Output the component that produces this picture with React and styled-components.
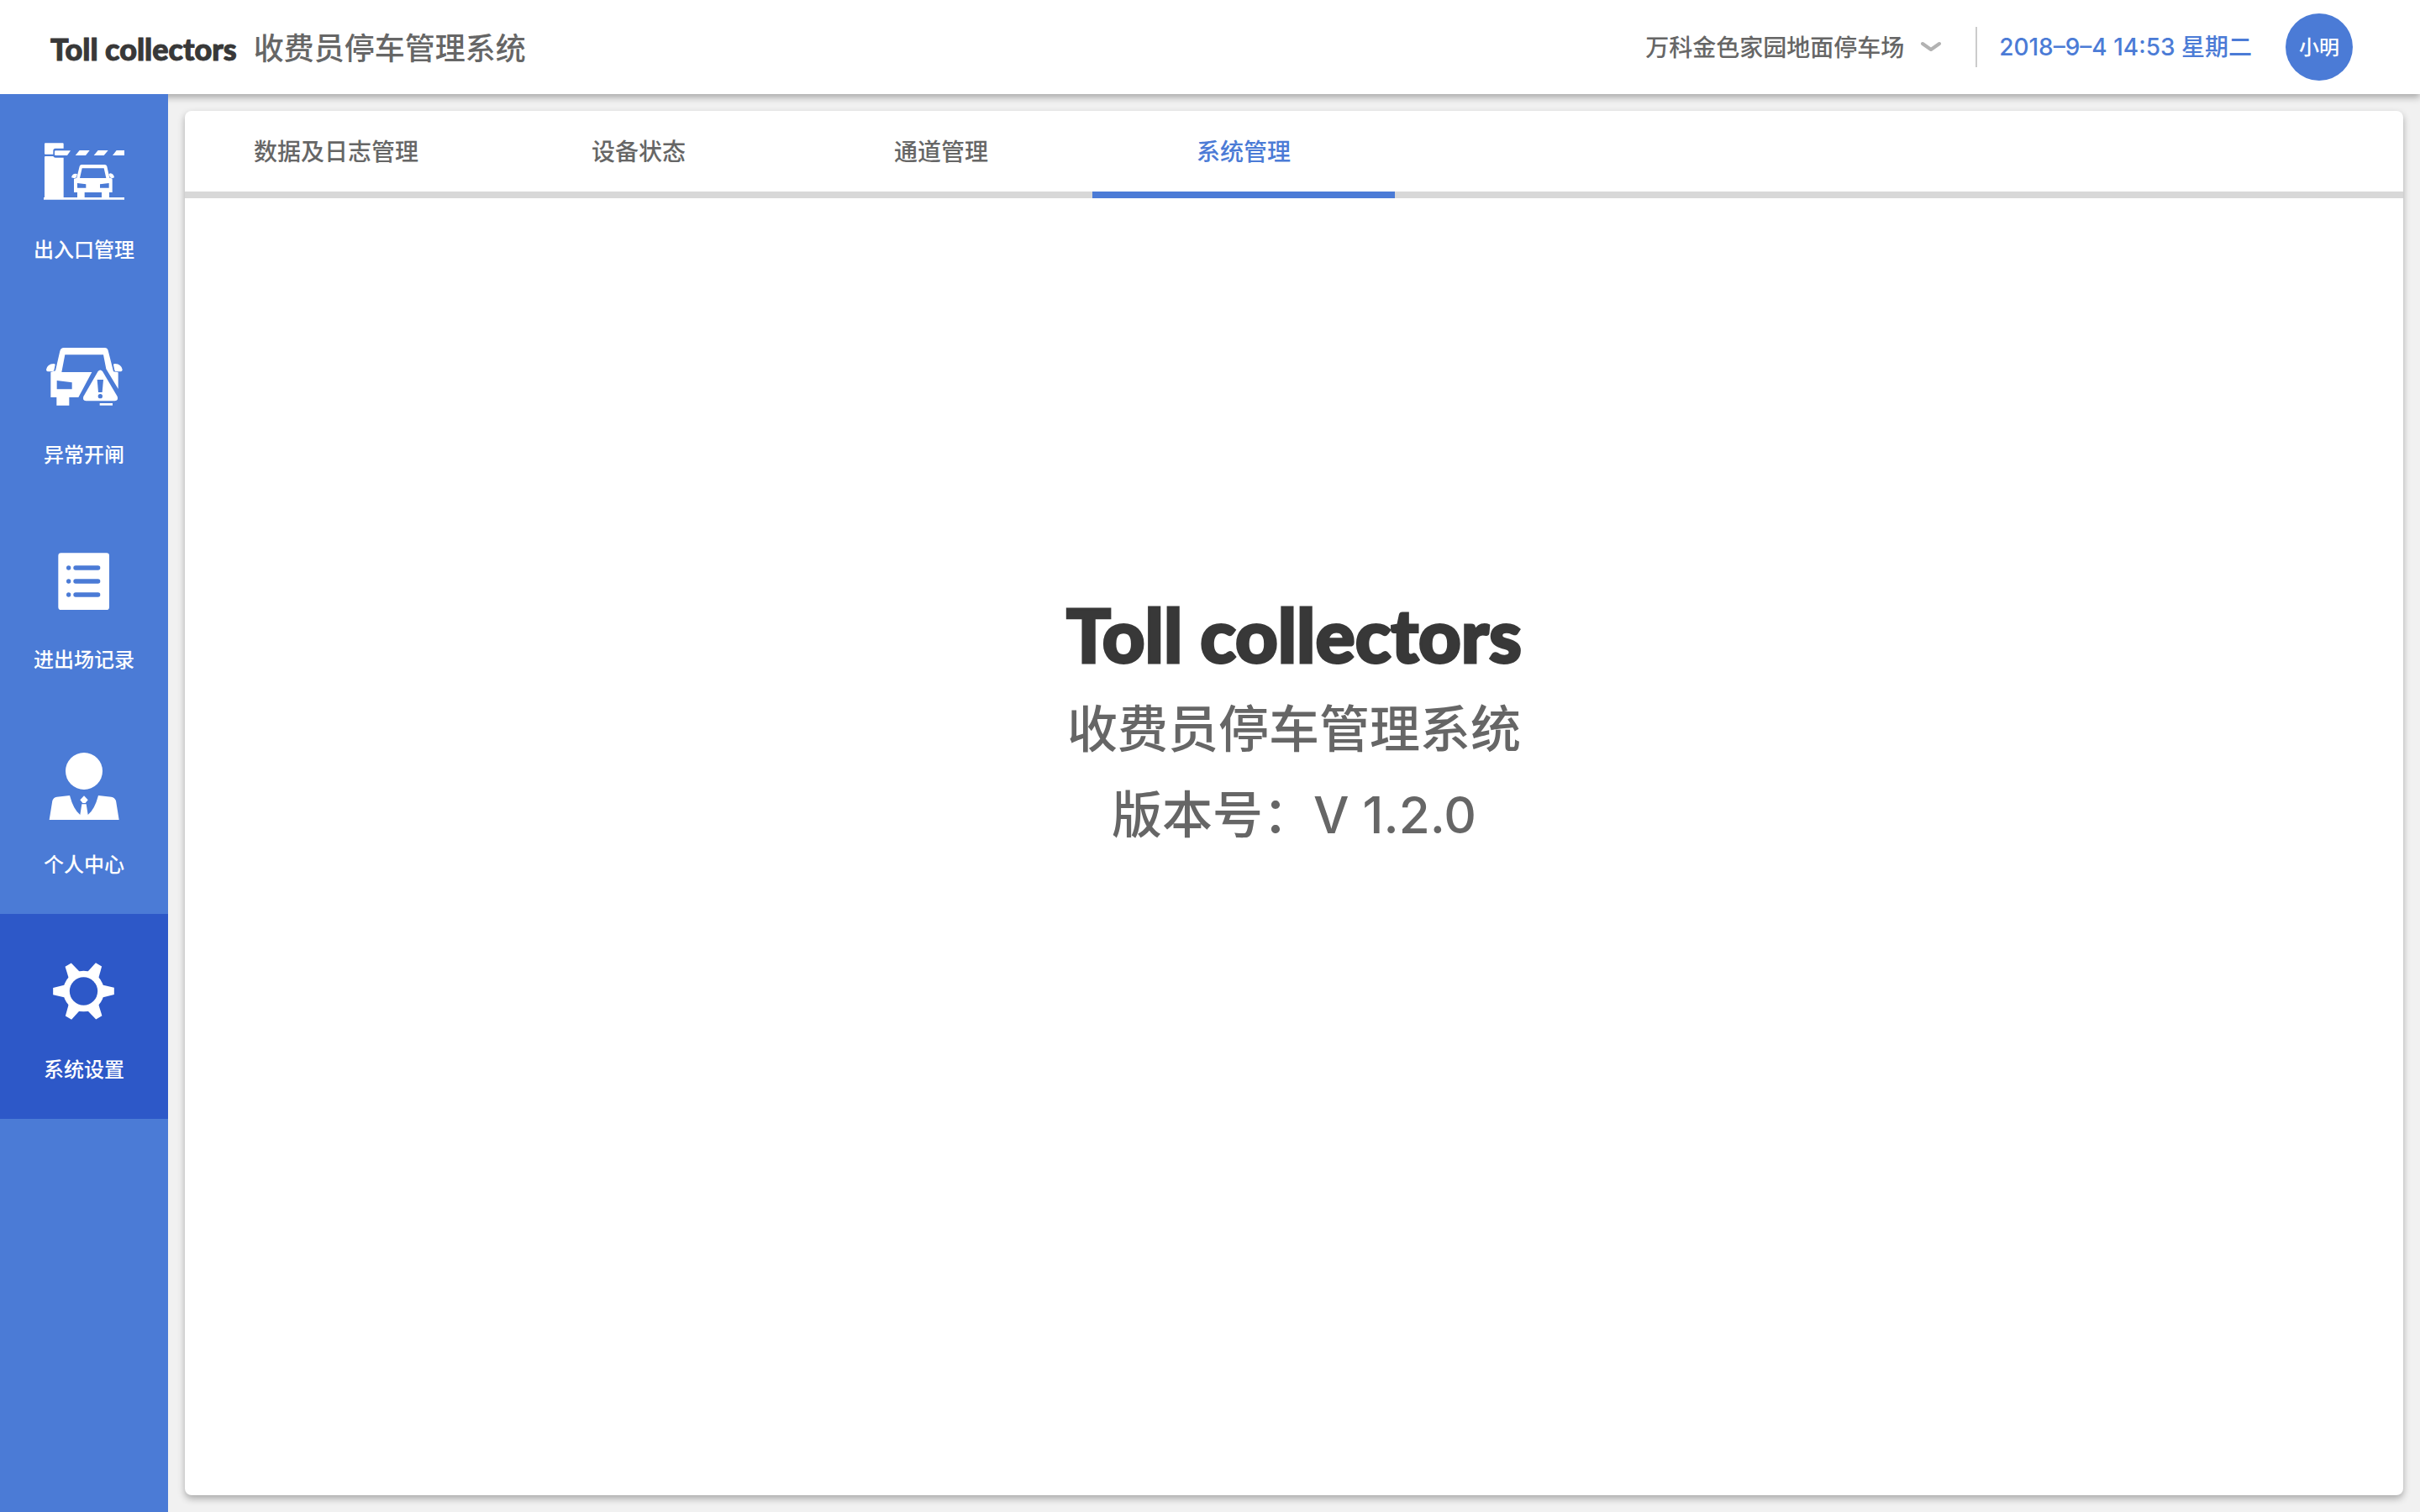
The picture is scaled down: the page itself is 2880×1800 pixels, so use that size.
import React, { useState } from "react";
import styled, { createGlobalStyle } from "styled-components";

const BLUE = "#4b7bd6";
const BLUE_DARK = "#2d58c8";
const INK = "#383838";
const GREY = "#666666";
const SHADOW = "0 4px 8px rgba(0, 0, 0, 0.3)";

const GlobalStyle = createGlobalStyle`
  *, *::before, *::after { box-sizing: border-box; }
  body {
    margin: 0;
    background: #f1f1f1;
    color: ${GREY};
    font-family: Inter, "Noto Sans CJK SC", sans-serif;
    font-weight: 500;
  }
  button, select {
    margin: 0;
    padding: 0;
    border: 0;
    background: none;
    color: inherit;
    font: inherit;
    cursor: pointer;
  }
  h1, p { margin: 0; }
`;

const Page = styled.div`
  min-height: 100vh;
  display: flex;
  flex-direction: column;
`;

const Header = styled.header`
  height: 112px;
  padding: 0 80px 0 60px;
  display: flex;
  align-items: center;
  justify-content: space-between;
  background: #fff;
  box-shadow: ${SHADOW};
`;

const Brand = styled.div`
  display: flex;
  align-items: center;
  gap: 20px;
  padding-top: 4px;
`;

const Wordmark = styled.span`
  color: ${INK};
  font-family: Lato, "Liberation Sans", sans-serif;
  font-weight: 900;
  font-size: ${(p) => (p.$large ? 88 : 36)}px;
  line-height: ${(p) => (p.$large ? 118 : 48)}px;
  -webkit-text-stroke: ${(p) => (p.$large ? 3 : 1)}px ${INK};
`;

const BrandName = styled.span`
  font-size: 36px;
  line-height: 48px;
`;

const Tools = styled.div`
  display: flex;
  align-items: center;
  font-size: 28px;
  line-height: 40px;
`;

const LotPicker = styled.label`
  display: grid;
  align-items: center;
  padding-right: 40px;

  & > * { grid-area: 1 / 1; }
  & > svg { justify-self: end; pointer-events: none; }
`;

const LotSelect = styled.select`
  appearance: none;
  padding-top: 2px;
  padding-right: 44px;
  line-height: 40px;
`;

const Clock = styled.time`
  height: 48px;
  padding: 0 40px 0 26px;
  border-left: 2px solid #cccccc;
  color: ${BLUE};
  line-height: 48px;
  white-space: pre;
`;

const Avatar = styled.button`
  width: 80px;
  height: 80px;
  padding-top: 2px;
  border-radius: 50%;
  background: ${BLUE};
  color: #fff;
  font-size: 24px;
`;

const Body = styled.div`
  flex: 1;
  display: flex;
`;

const Sidebar = styled.nav`
  position: relative;
  width: 200px;
  flex: none;
  display: flex;
  flex-direction: column;
  background: ${BLUE};
`;

const SideItem = styled.button`
  height: 244px;
  padding-bottom: 40px;
  padding-top: 44px;
  display: flex;
  flex-direction: column;
  align-items: center;
  gap: 28px;
  background: ${(p) => (p.$active ? BLUE_DARK : "transparent")};
  color: #fff;
  font-size: 24px;
  line-height: 36px;
`;

const Main = styled.main`
  flex: 1;
  display: flex;
  padding: 20px;
`;

const Card = styled.section`
  flex: 1;
  display: flex;
  flex-direction: column;
  background: #fff;
  border-radius: 8px;
  box-shadow: ${SHADOW};
`;

const Tabs = styled.div`
  display: flex;
  height: 104px;
  background: linear-gradient(#d8d8d8, #d8d8d8) bottom / 100% 8px no-repeat;
`;

const Tab = styled.button`
  width: 360px;
  padding-top: 2px;
  border-bottom: 8px solid ${(p) => (p.$active ? BLUE : "transparent")};
  color: ${(p) => (p.$active ? BLUE : GREY)};
  font-size: 28px;
  line-height: 40px;
`;

const About = styled.div`
  flex: 1;
  padding-top: 460px;
  display: flex;
  flex-direction: column;
  align-items: center;
  gap: 6px;
  text-align: center;
`;

const AboutLine = styled.p`
  font-size: 60px;
  line-height: 96px;
`;

function GateIcon({ cut }) {
  return (
    <svg width="96" height="96" viewBox="156 48 288 288" fill="#fff" aria-hidden="true">
      <path d="M159 94q0-3 3-3H224q3 0 3 3V110H198Q190 110 190 118V131H162q-3 0-3-3Z" />
      <path d="M159 141q0-3 3-3H190q2 5 8 5H227V286H159Z" />
      <path d="M199 118H252L240 135H199q-4 0-4-4V122q0-4 4-4Z" />
      <path d="M284 117H320L306 135H269ZM350 117H386L371 135H335ZM416 117H444V135H402Z" />
      <path d="M156 285H444V293H156Z" />
      <path d="M291 168H374Q380 168 382 174L391 215L398 217Q401 218 401 221V267H390V286H363V267H302V286H276V267H264V219L274 215L284 174Q286 168 291 168Z" />
      <path d="M255 214Q257 200 270 200L276 202L272 214L266 217ZM408 214Q406 200 394 199L388 202L393 214L400 217Z" />
      <path fill={cut} d="M293 181H371L379 216H285ZM276 234L307 238V251H276ZM389 234L357 238V251H389Z" />
    </svg>
  );
}

function AlertCarIcon({ cut }) {
  return (
    <svg width="96" height="96" viewBox="156 30 288 288" fill="#fff" aria-hidden="true">
      <path d="M228 72H374Q383 72 386 82L405 157L422 160V219L379 148L369 97H232L220 159H328L280 249H247V278H202V249H181V159L198 154L214 84Q217 72 228 72Z" />
      <path d="M165 150Q169 130 191 129Q197 129 197 133L193 152Q191 157 186 157H170Q165 156 165 150ZM437 150Q433 130 411 129Q404 129 405 133L409 152Q411 157 416 157H432Q437 156 437 150Z" />
      <path fill={cut} d="M203 189L257 196V220H203Z" />
      <path d="M350 156Q358 147 366 156L419 246Q424 261 410 262H307Q293 261 298 246Z" />
      <path fill={cut} d="M347 186H369L365 231H351Z" />
      <circle fill={cut} cx="358" cy="245" r="8" />
      <path d="M356 270H402V278H356Z" />
    </svg>
  );
}

function ListIcon({ cut }) {
  return (
    <svg width="96" height="96" viewBox="156 12 288 288" fill="#fff" aria-hidden="true">
      <rect x="208" y="55" width="182" height="203" rx="10" />
      {[108, 156, 204].map((y) => (
        <g key={y} fill={cut}>
          <circle cx="245" cy={y} r="8" />
          <rect x="262" y={y - 8} width="96" height="16" rx="8" />
        </g>
      ))}
    </svg>
  );
}

function PersonIcon() {
  return (
    <svg width="96" height="96" viewBox="156 54 288 288" fill="#fff" aria-hidden="true">
      <circle cx="300" cy="144" r="66" />
      <path d="M176 318L187 250Q190 238 203 236L249 231Q262 281 286 300L292 262H308L314 300Q338 281 351 231L397 236Q410 238 414 250L425 318Z" />
      <path d="M300 232L314 247L305 258H295L286 247Z" />
    </svg>
  );
}

function GearIcon({ cut }) {
  return (
    <svg width="96" height="96" viewBox="156 156 288 288" fill="#fff" aria-hidden="true">
      <g transform="translate(298.5 300)">
        <circle r="73" />
        {[0, 60, 120, 180, 240, 300].map((angle) => (
          <path key={angle} transform={`rotate(${angle})`} d="M60-24L70-22L109-13V12L70 22L60 24Z" />
        ))}
        <circle r="50" fill={cut} />
      </g>
    </svg>
  );
}

const MENU = [
  { label: "出入口管理", Icon: GateIcon },
  { label: "异常开闸", Icon: AlertCarIcon },
  { label: "进出场记录", Icon: ListIcon },
  { label: "个人中心", Icon: PersonIcon },
  { label: "系统设置", Icon: GearIcon },
];

const TABS = ["数据及日志管理", "设备状态", "通道管理", "系统管理"];

export default function App() {
  const [menu, setMenu] = useState(4);
  const [tab, setTab] = useState(3);

  return (
    <Page>
      <GlobalStyle />
      <Header>
        <Brand>
          <Wordmark>Toll collectors</Wordmark>
          <BrandName>收费员停车管理系统</BrandName>
        </Brand>
        <Tools>
          <LotPicker>
            <LotSelect aria-label="停车场">
              <option>万科金色家园地面停车场</option>
            </LotSelect>
            <svg width="26" height="14" viewBox="0 0 26 14" fill="none" stroke="#b2b2b2" strokeWidth="4" strokeLinecap="round" strokeLinejoin="round" aria-hidden="true">
              <path d="M3 3L13 10L23 3" />
            </svg>
          </LotPicker>
          <Clock dateTime="2018-09-04T14:53">2018–9–4 14:53 星期二</Clock>
          <Avatar type="button">小明</Avatar>
        </Tools>
      </Header>
      <Body>
        <Sidebar>
          {MENU.map(({ label, Icon }, i) => (
            <SideItem key={label} type="button" $active={i === menu} onClick={() => setMenu(i)}>
              <Icon cut={i === menu ? BLUE_DARK : BLUE} />
              {label}
            </SideItem>
          ))}
        </Sidebar>
        <Main>
          <Card>
            <Tabs role="tablist">
              {TABS.map((label, i) => (
                <Tab key={label} type="button" role="tab" aria-selected={i === tab} $active={i === tab} onClick={() => setTab(i)}>
                  {label}
                </Tab>
              ))}
            </Tabs>
            <About>
              <Wordmark as="h1" $large>Toll collectors</Wordmark>
              <AboutLine>收费员停车管理系统</AboutLine>
              <AboutLine>版本号：V 1.2.0</AboutLine>
            </About>
          </Card>
        </Main>
      </Body>
    </Page>
  );
}
